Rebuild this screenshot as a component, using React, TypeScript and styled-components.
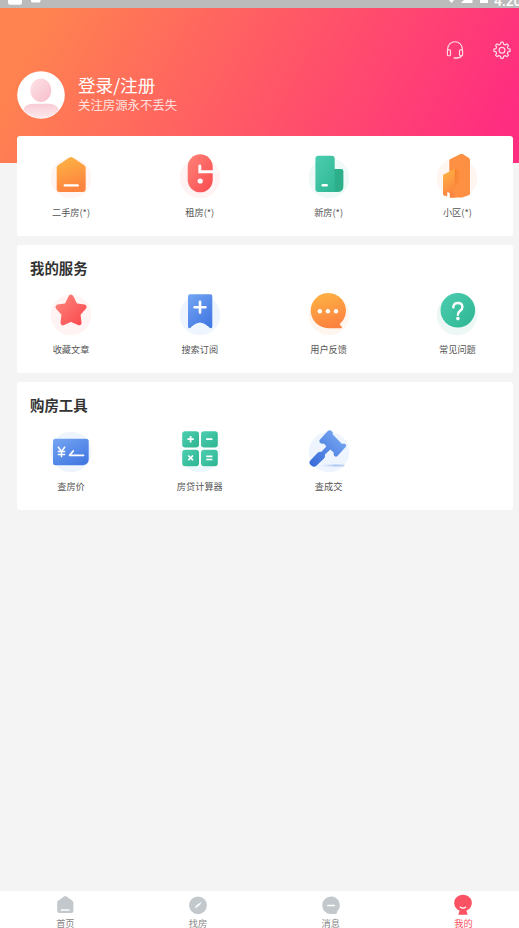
import React from "react";
import styled, { createGlobalStyle } from "styled-components";

const Global = createGlobalStyle`
  * { box-sizing: border-box; }
  html, body { margin: 0; padding: 0; overflow: hidden; background: #f4f4f4; }
  body { font-family: "Noto Sans CJK SC", "Noto Sans", sans-serif; }
`;

const Screen = styled.div`
  width: 519px;
  height: 928px;
  display: flex;
  flex-direction: column;
  overflow: hidden;
  background: #f4f4f4;
`;

const StatusBar = styled.div`
  height: 8px;
  flex: none;
  display: flex;
  justify-content: space-between;
  align-items: flex-end;
  overflow: hidden;
  background: #bbb;
`;

const StatusLeft = styled.svg`
  width: 60px;
  height: 8px;
`;

const StatusRight = styled.div`
  width: 75px;
  height: 8px;
  display: flex;
  align-items: flex-end;
  overflow: hidden;
`;

const StatusGlyphs = styled.svg`
  flex: none;
  width: 50px;
  height: 8px;
`;

const Clock = styled.span`
  flex: none;
  height: 8px;
  display: flex;
  align-items: flex-end;
  font: 500 14px/14px Roboto, sans-serif;
  color: #fff;
`;

const Header = styled.header`
  height: 155px;
  flex: none;
  display: flex;
  flex-direction: column;
  background: linear-gradient(118deg, #ff8350 8%, #ff5468 54%, #ff2d80 94%);
`;

const Actions = styled.div`
  display: flex;
  justify-content: flex-end;
  gap: 27px;
  padding: 32px 7px 0 0;
  height: 62px;

  svg { width: 20px; height: 20px; }
`;

const Profile = styled.div`
  display: flex;
  align-items: center;
  gap: 13px;
  padding-left: 17px;
  height: 49px;
`;

const Avatar = styled.svg`
  width: 48px;
  height: 48px;
  flex: none;
`;

const ProfileText = styled.div`
  color: #fff;
  white-space: nowrap;
`;

const LoginName = styled.div`
  font-size: 17.6px;
  line-height: 22px;
`;

const Slogan = styled.div`
  font-size: 12.4px;
  line-height: 19px;
  opacity: 0.8;
`;

const Main = styled.main`
  flex: 1;
  display: flex;
  flex-direction: column;
  gap: 9px;
  width: 496px;
  margin: -27px 0 0 17px;
`;

const Card = styled.section<{ $h: number; $top: number }>`
  height: ${(p) => p.$h}px;
  padding-top: ${(p) => p.$top}px;
  border-radius: 3px;
  background: #fff;
`;

const CardTitle = styled.h2`
  margin: 0 0 0 13px;
  height: 32px;
  font-size: 14.4px;
  line-height: 22px;
  font-weight: 700;
  color: #333;
`;

const Grid = styled.div`
  display: grid;
  grid-template-columns: repeat(4, 100px);
  column-gap: 28.8px;
  margin-left: 4px;
`;

const Cell = styled.div`
  display: flex;
  flex-direction: column;
  align-items: center;

  svg { width: 44px; height: 48px; }
`;

const Label = styled.span`
  margin-top: 4px;
  font-size: 9.2px;
  line-height: 16px;
  color: #555;
  white-space: nowrap;
`;

const TabBar = styled.nav`
  height: 37px;
  flex: none;
  display: grid;
  grid-template-columns: repeat(4, 132.7px);
  margin-left: -1px;
  background: #fff;
`;

const Tab = styled.div<{ $active?: boolean }>`
  display: flex;
  flex-direction: column;
  align-items: center;
  padding-top: 2px;
  color: ${(p) => (p.$active ? "#fb4f60" : "#888")};
  font-size: 9.2px;

  svg { width: 22px; height: 23px; flex: none; }
`;

const TabLabel = styled.span`
  margin-top: 2px;
  line-height: 10px;
`;

const Gradients = () => (
  <svg width="0" height="0" display="block">
    <defs>
      <linearGradient id="orange" x1="0" y1="0" x2="0.3" y2="1">
        <stop offset="0" stopColor="#fdb644" />
        <stop offset="1" stopColor="#fd8440" />
      </linearGradient>
      <linearGradient id="red" x1="0" y1="0" x2="1" y2="1">
        <stop offset="0" stopColor="#fd8378" />
        <stop offset="1" stopColor="#fb4a50" />
      </linearGradient>
      <linearGradient id="green" x1="0" y1="0" x2="1" y2="1">
        <stop offset="0" stopColor="#4bceb0" />
        <stop offset="1" stopColor="#2fb592" />
      </linearGradient>
      <linearGradient id="blue" x1="0" y1="0" x2="0.7" y2="1">
        <stop offset="0" stopColor="#74a5f2" />
        <stop offset="1" stopColor="#4479e2" />
      </linearGradient>
      <linearGradient id="gavel" x1="1" y1="0" x2="0" y2="1">
        <stop offset="0.1" stopColor="#78a8f2" />
        <stop offset="1" stopColor="#3568d8" />
      </linearGradient>
      <linearGradient id="pink" x1="0" y1="0" x2="1" y2="1">
        <stop offset="0" stopColor="#fde3e6" />
        <stop offset="1" stopColor="#f8bdca" />
      </linearGradient>
      <linearGradient id="shoulders" x1="0" y1="0" x2="0" y2="1">
        <stop offset="0" stopColor="#f9cbd5" />
        <stop offset="1" stopColor="#fdeaee" />
      </linearGradient>
      <linearGradient id="shade" x1="0" y1="0" x2="1" y2="0.2">
        <stop offset="0" stopColor="#f57c26" />
        <stop offset="1" stopColor="#fd9043" stopOpacity="0" />
      </linearGradient>
      <linearGradient id="ground" gradientUnits="userSpaceOnUse" x1="15" y1="0" x2="38" y2="0">
        <stop offset="0" stopColor="#b9cdf5" stopOpacity="0.1" />
        <stop offset="0.6" stopColor="#a9c2f3" />
        <stop offset="1" stopColor="#c6d6f8" />
      </linearGradient>
    </defs>
  </svg>
);

const Icon = ({ halo, children }: { halo: string; children: React.ReactNode }) => (
  <svg viewBox="0 0 44 48" fill="none">
    <circle cx="22" cy="26" r="20.3" fill={halo} />
    {children}
  </svg>
);

const ResaleIcon = () => (
  <Icon halo="#fff5f2">
    <path d="M20 5.8Q22 4.4 24 5.8L35.3 13.2Q36.7 14.2 36.7 16V37Q36.7 40 33.7 40H10.7Q7.7 40 7.7 37V16Q7.7 14.2 9.1 13.2Z" fill="url(#orange)" />
    <path d="M15.8 33.4H28.7" stroke="#fff" strokeWidth="2.4" strokeLinecap="round" />
  </Icon>
);

const RentIcon = () => (
  <Icon halo="#fff4f3">
    <rect x="9.7" y="2.3" width="25" height="38" rx="12.5" fill="url(#red)" />
    <path d="M21.8 14V19.7H38" stroke="#fff" strokeWidth="2.9" strokeLinecap="round" />
    <circle cx="22.2" cy="29" r="2.6" fill="#fff" />
  </Icon>
);

const NewHomeIcon = () => (
  <Icon halo="#eff9f7">
    <path d="M27 17H34Q36.4 17 36.4 19.4V34Q36.4 40 30.4 40H22V17Z" fill="#2daf8c" />
    <path d="M11.4 3.7H24.7Q27.7 3.7 27.7 6.7V35Q27.7 40 30.4 40H11.4Q8.4 40 8.4 37V6.7Q8.4 3.7 11.4 3.7Z" fill="url(#green)" />
    <path d="M15.8 33.3H19.6" stroke="#fff" strokeWidth="2.6" strokeLinecap="round" />
  </Icon>
);

const EstateIcon = () => (
  <Icon halo="#fff6f1">
    <path d="M14.3 9Q14.3 7.8 15.4 7.1L25.6 2Q26.6 1.5 27.6 2L34 6Q35 6.8 35 8V41.5Q35 42.8 33.8 43.3L27 45.6H14.3Z" fill="#fd9043" />
    <path d="M19.6 17L27.5 21.5V25L19.6 35Z" fill="url(#shade)" />
    <path d="M8 24Q8 22.8 9 22.3L19.6 17Q20.5 30 18 40L20.4 45.6H14.6V41L12.5 40.4V44.4L8.8 43.4Q8 43 8 42Z" fill="url(#orange)" />
    <path d="M12.4 40.3L14.7 41V46.5L12.4 45Z" fill="#fff" />
  </Icon>
);

const StarIcon = () => (
  <Icon halo="#fff4f3">
    <path d="M22 8.2L26.2 16.6L35 18L29 24.8L30 33.8L22 30.2L14 33.8L15 24.8L9 18L17.8 16.6Z" fill="url(#red)" stroke="url(#red)" strokeWidth="5" strokeLinejoin="round" />
  </Icon>
);

const SubscribeIcon = () => (
  <Icon halo="#eff5fe">
    <path d="M12 5.3H32.3Q34.3 5.3 34.3 7.3V37.6Q34.3 39.6 32 39L29.7 37Q22 30 14.3 37L12.2 39Q10 39.6 10 37.6V7.3Q10 5.3 12 5.3Z" fill="url(#blue)" />
    <path d="M22 12.8V23.6M16.6 18.2H27.4" stroke="#fff" strokeWidth="2.6" strokeLinecap="round" />
  </Icon>
);

const FeedbackIcon = () => (
  <Icon halo="#fff6f0">
    <path d="M21.4 4A17.7 17.6 0 0 1 32.6 35.2L35 38.2Q35 39.2 34 39.2H21.4A17.7 17.6 0 0 1 21.4 4Z" fill="url(#orange)" />
    <circle cx="12.8" cy="22.3" r="2.2" fill="#fff" />
    <circle cx="20.9" cy="22.3" r="2.2" fill="#fff" />
    <circle cx="29" cy="22.3" r="2.2" fill="#fff" />
  </Icon>
);

const QuestionIcon = () => (
  <Icon halo="#edf8f6">
    <circle cx="22.8" cy="21.2" r="17.3" fill="url(#green)" />
    <path d="M18.3 18.4Q18.4 14 22.9 14Q27.4 14 27.4 18Q27.4 20.2 25.2 21.8Q22.9 23.4 22.9 25.8" stroke="#fff" strokeWidth="2.4" strokeLinecap="round" />
    <circle cx="22.9" cy="29.6" r="1.8" fill="#fff" />
  </Icon>
);

const PriceIcon = () => (
  <Icon halo="#eff5fe">
    <path d="M6.5 12.7H37.2Q39.7 12.7 39.7 15.2V33.5A5.8 5.8 0 0 1 33.9 39.3H6.5Q4 39.3 4 36.8V15.2Q4 12.7 6.5 12.7Z" fill="url(#blue)" />
    <path d="M9 20.8L12.5 25.4L16 20.8M12.5 25.4V31.2M8.8 25.4H16.2M8.8 28.4H16.2" stroke="#fff" strokeWidth="1.5" />
    <path d="M24.2 25L20.6 29.3H34.5" stroke="#fff" strokeWidth="1.8" strokeLinecap="round" strokeLinejoin="round" />
  </Icon>
);

const CalculatorIcon = () => (
  <Icon halo="#edf8fd">
    <rect x="3.4" y="4.6" width="37" height="36" rx="3" fill="#fff" />
    <rect x="4.2" y="5.2" width="16.8" height="16.4" rx="3" fill="url(#green)" />
    <rect x="23" y="5.2" width="16.8" height="16.4" rx="3" fill="url(#green)" />
    <rect x="4.2" y="23.8" width="16.8" height="16.4" rx="3" fill="url(#green)" />
    <rect x="23" y="23.8" width="16.8" height="16.4" rx="3" fill="url(#green)" />
    <path d="M12.6 10V16.4M9.4 13.2H15.8M28.2 13.2H34.4M10.3 29.5L15 34.2M15 29.5L10.3 34.2M28.2 30.3H34.4M28.2 33.5H34.4" stroke="#fff" strokeWidth="1.7" />
  </Icon>
);

const GavelIcon = () => (
  <Icon halo="#eff5fe">
    <rect x="15" y="38.6" width="22.6" height="1.8" rx="0.9" fill="url(#ground)" />
    <path d="M20.8 5Q22.8 3.3 24.6 5Q26.5 6.5 25.6 8.3L35 18Q37 16.8 38.6 18.2Q40 19.6 38.6 21L30.5 30Q28.8 31.4 27.4 30Q26 28.8 26.8 26.8L23.4 23.6L18 28.6Q18.4 31 17 32.4L9.4 39.8Q7 41.8 4.6 39.8L3.2 38.4Q1.4 36.4 3.6 34.2L10.2 27.2Q12 25.4 14.4 25.8L19.4 20.6L17.4 18L16 17.4Q14.2 18.2 12.8 16.6Q11.6 15 13 13.4Z" fill="url(#gavel)" />
  </Icon>
);

const HeadsetIcon = () => (
  <svg viewBox="0 0 20 20" fill="none" stroke="#ffdbe4" strokeWidth="1.15" strokeLinecap="round" strokeLinejoin="round">
    <path d="M2.6 10V9A7.4 7.3 0 0 1 17.4 9V10" />
    <rect x="2.4" y="9.8" width="3.1" height="5.9" rx="1" />
    <rect x="14.5" y="9.8" width="3.1" height="5.9" rx="1" />
    <path d="M16.6 15.8Q15.4 17.6 12.2 17.9H9.2" strokeWidth="1.5" />
  </svg>
);

const GearIcon = () => (
  <svg viewBox="0 0 20 20" fill="none" stroke="#ffdbe4" strokeWidth="1.2" strokeLinejoin="round">
    <path d="M8.9 2.2H11.1L11.6 4.2L13.2 4.9L15 3.8L16.5 5.3L15.4 7L16 8.6L18.1 9.1V11.3L16 11.8L15.4 13.4L16.5 15.2L15 16.7L13.2 15.6L11.6 16.2L11.1 18.3H8.9L8.4 16.2L6.8 15.6L5 16.7L3.5 15.2L4.6 13.4L4 11.8L1.9 11.3V9.1L4 8.6L4.6 7L3.5 5.3L5 3.8L6.8 4.9L8.4 4.2Z" />
    <circle cx="10" cy="10.2" r="2.9" />
  </svg>
);

const HomeTabIcon = () => (
  <svg viewBox="0 0 22 23">
    <path d="M10 3.5Q11.3 2.6 12.6 3.5L18.4 7.7Q19.4 8.5 19.4 9.7V18Q19.4 20 17.4 20H5.2Q3.2 20 3.2 18V9.7Q3.2 8.5 4.2 7.7Z" fill="#c2c8cb" />
    <path d="M7.4 16.9H15" stroke="#fff" strokeWidth="1.5" strokeLinecap="round" />
  </svg>
);

const FindTabIcon = () => (
  <svg viewBox="0 0 22 23">
    <circle cx="11" cy="12.3" r="8.9" fill="#c2c8cb" />
    <path d="M8 15.3L9.4 12.5L14.2 9.3L12.6 12.1Z" fill="#fff" stroke="#fff" strokeWidth="0.4" />
  </svg>
);

const MessageTabIcon = () => (
  <svg viewBox="0 0 22 23">
    <path d="M11 3.4A8.8 8.8 0 0 1 17.2 18.4L16.4 21H11A8.8 8.8 0 0 1 11 3.4Z" fill="#c2c8cb" />
    <path d="M7.8 12.4H14.4" stroke="#fff" strokeWidth="1.5" strokeLinecap="round" />
  </svg>
);

const MeTabIcon = () => (
  <svg viewBox="0 0 22 23">
    <path d="M11 1.7A8.7 8.3 0 0 1 14.4 17.7L15.7 21.7H6.3L7.6 17.7A8.7 8.3 0 0 1 11 1.7Z" fill="#fb5364" />
    <path d="M8.2 14.1Q11 16.2 13.8 14.1" stroke="#fff" strokeWidth="1.3" fill="none" strokeLinecap="round" />
  </svg>
);

type Item = [string, React.ComponentType];

const homes: Item[] = [
  ["二手房(*)", ResaleIcon],
  ["租房(*)", RentIcon],
  ["新房(*)", NewHomeIcon],
  ["小区(*)", EstateIcon],
];
const services: Item[] = [
  ["收藏文章", StarIcon],
  ["搜索订阅", SubscribeIcon],
  ["用户反馈", FeedbackIcon],
  ["常见问题", QuestionIcon],
];
const tools: Item[] = [
  ["查房价", PriceIcon],
  ["房贷计算器", CalculatorIcon],
  ["查成交", GavelIcon],
];
const tabs: Item[] = [
  ["首页", HomeTabIcon],
  ["找房", FindTabIcon],
  ["消息", MessageTabIcon],
  ["我的", MeTabIcon],
];

const Items = ({ items }: { items: Item[] }) => (
  <Grid>
    {items.map(([label, Glyph]) => (
      <Cell key={label}>
        <Glyph />
        <Label>{label}</Label>
      </Cell>
    ))}
  </Grid>
);

export default function App() {
  return (
    <>
      <Global />
      <Screen>
        <StatusBar>
          <StatusLeft viewBox="0 0 60 8">
            <rect x="8" y="-6" width="14" height="10.7" rx="2" fill="#fff" />
            <rect x="31" y="-6" width="9.5" height="8.4" rx="1.5" fill="#fff" />
          </StatusLeft>
          <StatusRight>
            <StatusGlyphs viewBox="0 0 50 8">
              <path d="M3 -2H12L7.5 3Z" fill="#fff" />
              <path d="M17 3L24 -4H28.5V3Z" fill="#fff" />
              <rect x="36" y="-6" width="8" height="9" fill="#fff" />
            </StatusGlyphs>
            <Clock>4:20</Clock>
          </StatusRight>
        </StatusBar>
        <Header>
          <Actions>
            <HeadsetIcon />
            <GearIcon />
          </Actions>
          <Profile>
            <Avatar viewBox="0 0 48 48">
              <circle cx="24" cy="24" r="23.8" fill="#fff" />
              <path d="M6.2 39Q8 33 16 32.8H32Q40 33 41.8 39A23.8 23.8 0 0 1 6.2 39Z" fill="url(#shoulders)" />
              <ellipse cx="23.8" cy="19.2" rx="11.2" ry="12.4" fill="#fff" />
              <ellipse cx="23.8" cy="19.2" rx="10.4" ry="11.7" fill="url(#pink)" />
            </Avatar>
            <ProfileText>
              <LoginName>登录/注册</LoginName>
              <Slogan>关注房源永不丢失</Slogan>
            </ProfileText>
          </Profile>
        </Header>
        <Main>
          <Card $h={100} $top={16}>
            <Items items={homes} />
          </Card>
          <Card $h={128} $top={12}>
            <CardTitle>我的服务</CardTitle>
            <Items items={services} />
          </Card>
          <Card $h={128} $top={12}>
            <CardTitle>购房工具</CardTitle>
            <Items items={tools} />
          </Card>
        </Main>
        <TabBar>
          {tabs.map(([label, Glyph], i) => (
            <Tab key={label} $active={i === 3}>
              <Glyph />
              <TabLabel>{label}</TabLabel>
            </Tab>
          ))}
        </TabBar>
        <Gradients />
      </Screen>
    </>
  );
}
